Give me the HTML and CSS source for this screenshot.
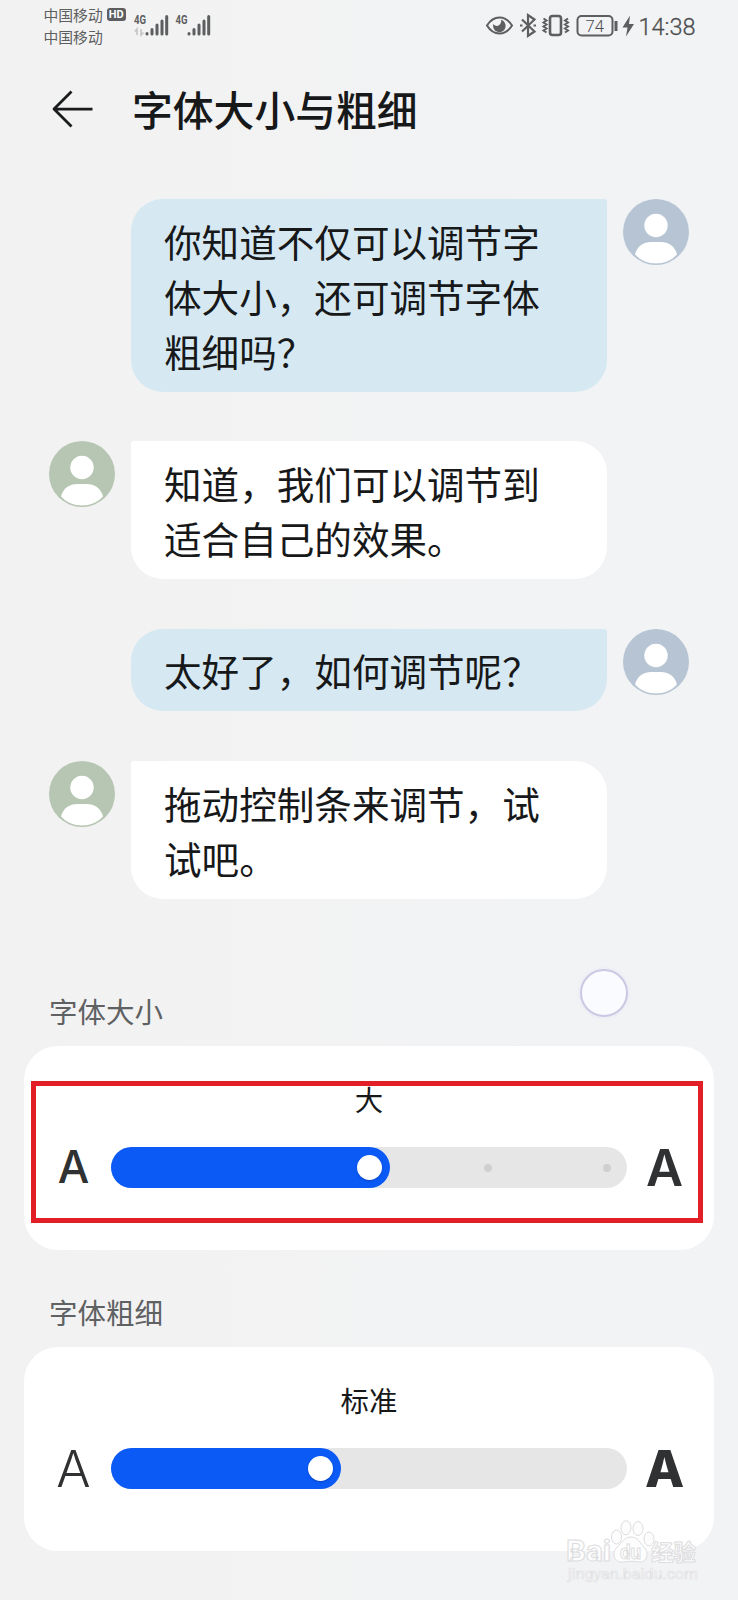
FILE: index.html
```html
<!DOCTYPE html>
<html lang="zh-CN">
<head>
<meta charset="utf-8">
<title>字体大小与粗细</title>
<link rel="stylesheet" href="styles.css">
</head>
<body>
<svg class="defs" aria-hidden="true">
  <defs>
    <symbol id="person" viewBox="0 0 66 66">
      <circle cx="33" cy="33" r="33" fill="currentColor"/>
      <circle cx="33" cy="26.5" r="11.7" fill="#fff"/>
      <path d="M12 55.5C14 47 21 43 28 43h10c7 0 14 4 16 12.500C48.500 61.500 41 64.500 33 64.500S17.500 61.500 12 55.500z" fill="#fff"/>
    </symbol>
  </defs>
</svg>
<div class="screen">
  <header class="status">
    <div class="carriers">
      <div class="carrier">中国移动<span class="hd">HD</span></div>
      <div class="carrier">中国移动</div>
    </div>
    <svg class="signals" width="80" height="26" viewBox="0 0 80 26">
      <g class="net"><text x="1" y="11" textLength="12" lengthAdjust="spacingAndGlyphs">4G</text><text x="42.500" y="11" textLength="12" lengthAdjust="spacingAndGlyphs">4G</text></g>
      <path d="M4 22v-6l-2 2.500M8 16v6l2.500-2.500" fill="none" stroke="#c4c5c7" stroke-width="1.600"/>
      <g fill="none" stroke="#5d5e60" stroke-width="3" stroke-linecap="round">
        <path d="M14 20.500v.5M19 16.500v4.500M24 12v9M29 8v13M33.700 3.500v17.500"/>
        <path d="M56 20.500v.5M61 16.500v4.500M66 12v9M71 8v13M75.700 3.500v17.500"/>
      </g>
    </svg>
    <svg class="indicators" width="212" height="30" viewBox="0 0 212 30">
      <g fill="none" stroke="#5d5e60" stroke-width="2">
        <path d="M2 15.500C6 9 10 7.500 14.500 7.500S23 9 27 15.500C23 22 19 23.500 14.500 23.500S6 22 2 15.500z"/>
        <path d="M37 9.500l12.500 12-6.500 4.500V5l6.500 4.500L37 21.500M35 15.500h2.500M48.500 15.500h2.500" stroke-width="2.200"/>
        <rect x="65" y="6" width="11" height="19" rx="2.500" stroke-width="2.600"/>
        <path d="M58.500 8.500l3 2-3 2 3 2-3 2 3 2-3 2 3 2M83 8.500l-3 2 3 2-3 2 3 2-3 2 3 2-3 2" stroke-width="2"/>
        <rect x="92.500" y="6" width="35" height="19.500" rx="4"/>
        <path d="M131 11v10" stroke-width="3"/>
      </g>
      <path d="M16 9.800a6.300 6.300 0 1 1-7.600 4c.8 2 3.500 2.800 5.600 1.400 2-1.400 2.600-3.600 2-5.400z" fill="#5d5e60"/>
      <path d="M145 5.500l-7.500 12h5l-1.500 9 8-12.500h-5z" fill="#5d5e60"/>
      <text class="charge" x="100.500" y="22" textLength="18.500" lengthAdjust="spacingAndGlyphs">74</text>
      <text class="clock" x="153.500" y="25.200" textLength="57" lengthAdjust="spacingAndGlyphs">14:38</text>
    </svg>
  </header>

  <div class="titlebar">
    <svg class="back" width="42" height="38" viewBox="0 0 42 38"><path d="M19.500 1.500L2 19l17.500 17.500M2 19.200h38.500" fill="none" stroke="#1a1b1c" stroke-width="2.800" stroke-linejoin="round"/></svg>
    <h1 class="title">字体大小与粗细</h1>
  </div>

  <main class="chat">
    <div class="row sent"><p class="bubble">你知道不仅可以调节字体大小，还可调节字体粗细吗？</p><svg class="avatar"><use href="#person"/></svg></div>
    <div class="row received"><svg class="avatar"><use href="#person"/></svg><p class="bubble">知道，我们可以调节到适合自己的效果。</p></div>
    <div class="row sent"><p class="bubble">太好了，如何调节呢？</p><svg class="avatar"><use href="#person"/></svg></div>
    <div class="row received"><svg class="avatar"><use href="#person"/></svg><p class="bubble last-message">拖动控制条来调节，试试吧。</p></div>
  </main>

  <section class="setting size">
    <h2 class="label">字体大小</h2>
    <div class="card">
      <div class="value">大</div>
      <div class="control">
        <span class="letter small">A</span>
        <div class="track"><div class="fill"><i class="knob"></i></div><i class="tick"></i><i class="tick last"></i></div>
        <span class="letter large">A</span>
      </div>
      <div class="highlight"></div>
    </div>
  </section>

  <section class="setting weight">
    <h2 class="label">字体粗细</h2>
    <div class="card">
      <div class="value">标准</div>
      <div class="control">
        <span class="letter light">A</span>
        <div class="track"><div class="fill"><i class="knob"></i></div></div>
        <span class="letter bold">A</span>
      </div>
    </div>
  </section>

  <div class="touch-ball"></div>

  <svg class="watermark" width="140" height="70" viewBox="0 0 140 70">
    <g fill="#fdfdfd" stroke="#dddddf" stroke-width="1">
      <text x="5" y="41" font-size="29" font-weight="700" textLength="45" lengthAdjust="spacingAndGlyphs">Bai</text>
      <ellipse cx="55.500" cy="17" rx="5" ry="7"/>
      <ellipse cx="65" cy="7.800" rx="5" ry="7"/>
      <ellipse cx="77" cy="8.500" rx="5" ry="7"/>
      <ellipse cx="88" cy="19" rx="5" ry="7"/>
      <path d="M70 17c7 0 9 6 13 10 5 5 4 16-5 15-5-1-11-1-16 0-9 1-12-9-6-15 5-4 7-10 14-10z"/>
      <text x="59" y="39" font-size="20" font-weight="700" textLength="21" lengthAdjust="spacingAndGlyphs">du</text>
      <text x="90" y="40" font-size="22" font-weight="700" textLength="45" lengthAdjust="spacingAndGlyphs">经验</text>
    </g>
    <text x="7" y="59" font-size="15.500" fill="#fdfdfd" stroke="#e1e1e3" stroke-width=".7" textLength="130" lengthAdjust="spacingAndGlyphs">jingyan.baidu.com</text>
  </svg>
</div>
</body>
</html>
```
FILE: styles.css
```css
* { box-sizing: border-box; }
body { margin: 0; background: #f2f2f3; font-family: "Noto Sans CJK SC", sans-serif; color: #171819; }
h1, h2, p { margin: 0; font-weight: 400; }
.defs { position: absolute; width: 0; height: 0; }
.screen { position: relative; width: 738px; height: 1600px; overflow: hidden; background: linear-gradient(90deg, #f2f2f2, #f2f3f5); }

.status { display: flex; height: 70px; padding: 3.5px 0 0 43.5px; color: #5d5e60; }
.carriers { width: 89px; }
.carrier { display: flex; align-items: center; gap: 4px; height: 22.5px; font-size: 14.8px; line-height: 22px; white-space: nowrap; }
.hd { width: 19px; height: 13px; border-radius: 3px; background: #5d5e60; color: #fff; font: 700 11px/13px Roboto, sans-serif; text-align: center; }
.signals { margin-top: 9.5px; }
.net text { font: 700 13px Roboto, sans-serif; fill: #5d5e60; }
.indicators { margin: 6.5px 0 0 272.5px; }
.charge { font: 300 17px Roboto, sans-serif; fill: #4d4e50; }
.clock { font: 300 24px Roboto, sans-serif; fill: #4d4e50; stroke: #4d4e50; stroke-width: .3px; }

.titlebar { display: flex; align-items: center; gap: 38px; height: 78px; padding-left: 52px; }
.back { margin-top: -1px; }
.title { font-size: 40.8px; line-height: 60px; font-weight: 500; }

.chat { display: flex; flex-direction: column; gap: 49.8px; padding: 51px 49px 0; }
.row { display: flex; gap: 16px; }
.sent { justify-content: flex-end; }
.avatar { flex: none; width: 66px; height: 66px; color: #b6c4d3; }
.received .avatar { color: #b6c6b2; }
.bubble { width: 476px; padding: 13.5px 32px 14px 33px; font-size: 37.6px; line-height: 55px; border-radius: 32px; word-break: break-all; }
.bubble.last-message { padding-top: 14.5px; }
.sent .bubble { background: #d6e9f2; border-top-right-radius: 3px; }
.received .bubble { background: #fff; border-top-left-radius: 3px; }

.setting { padding: 0 24px; }
.size { margin-top: 91px; }
.weight { margin-top: 41px; }
.label { height: 56px; padding-left: 25px; color: #606162; font-size: 28.500px; line-height: 42px; }
.card { position: relative; height: 204px; padding-top: 32px; background: #fff; border-radius: 34px; }
.value { height: 69px; font-size: 28.400px; line-height: 42px; text-align: center; }
.control { display: flex; align-items: center; height: 41px; }
.letter { width: 87px; padding-left: 12px; font-family: Inter, sans-serif; line-height: 41px; text-align: center; color: #303132; }
.letter:last-child { padding: 0 12px 0 0; }
.small { font-size: 44.500px; font-weight: 500; }
.large { font-size: 51px; font-weight: 600; }
.light { font-size: 51px; font-weight: 300; }
.bold { font-size: 51px; font-weight: 800; }
.track { position: relative; flex: none; width: 516px; height: 41px; border-radius: 21px; background: #e6e6e6; }
.fill { display: flex; align-items: center; justify-content: flex-end; height: 41px; padding-right: 8.500px; border-radius: 21px; background: #0b5af5; }
.size .fill { width: 279px; }
.weight .fill { width: 230px; }
.knob { width: 25px; height: 25px; border-radius: 50%; background: #fff; box-shadow: 0 1px 2px rgba(0, 20, 90, .3); }
.tick { position: absolute; left: 373px; top: 17px; width: 8px; height: 8px; border-radius: 50%; background: #cfcfcf; }
.last { left: 492px; }
.highlight { position: absolute; left: 7px; top: 35px; width: 672px; height: 142px; border: 5px solid #e21f27; }

.touch-ball { position: absolute; left: 580px; top: 969px; width: 48px; height: 48px; border: 2px solid #cbc8e3; border-radius: 50%; background: #fafbff; box-shadow: 0 0 4px #e6e6f6; }
.watermark { position: absolute; left: 561px; top: 1520px; font-family: Roboto, "Noto Sans CJK SC", sans-serif; }
```
